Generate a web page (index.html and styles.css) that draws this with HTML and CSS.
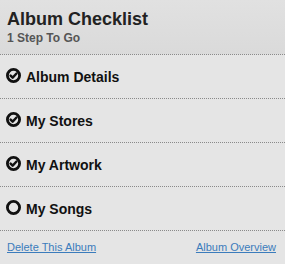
FILE: index.html
```html
<!DOCTYPE html>
<html lang="en">
<head>
  <meta charset="UTF-8" />
  <title>Album Checklist</title>
  <link rel="stylesheet" href="styles.css">
</head>
<body>

  <div id="checklist">
    <div class="header">
      <h1>Album Checklist</h1>
      <p class="steps">1 Step To Go</p>
    </div>

    <!-- pasos -->
    <div class="step done">
      <svg class="icon" viewBox="0 0 16 16"><circle cx="8" cy="8" r="6.5"/><path d="M4.9 8.1 L7.1 10.3 L11.2 5.9"/></svg>
      <span>Album Details</span>
    </div>
    <div class="step done">
      <svg class="icon" viewBox="0 0 16 16"><circle cx="8" cy="8" r="6.5"/><path d="M4.9 8.1 L7.1 10.3 L11.2 5.9"/></svg>
      <span>My Stores</span>
    </div>
    <div class="step done">
      <svg class="icon" viewBox="0 0 16 16"><circle cx="8" cy="8" r="6.5"/><path d="M4.9 8.1 L7.1 10.3 L11.2 5.9"/></svg>
      <span>My Artwork</span>
    </div>
    <div class="step">
      <svg class="icon" viewBox="0 0 16 16"><circle cx="8" cy="8" r="6.5"/></svg>
      <span>My Songs</span>
    </div>

    <div class="footer">
      <a href="#">Delete This Album</a>
      <a href="#">Album Overview</a>
    </div>
  </div>

</body>
</html>
```

FILE: styles.css
```css
body {
  margin: 0;
  padding: 0;
  background: #e5e5e5;
  font-family: "Liberation Sans", Arial, sans-serif;
}
#checklist {
  width: 285px;
}
.header {
  padding: 9px 7px 9px;
  background: linear-gradient(180deg, #e1e1e1 0%, #dadada 100%);
  border-bottom: 1px dotted #8a8a8a;
}
.header h1 {
  margin: 0;
  font-size: 18px;
  line-height: 20px;
  font-weight: bold;
  color: #222;
}
.header .steps {
  margin: 2px 0 0;
  font-size: 12px;
  line-height: 14px;
  font-weight: bold;
  color: #555;
}
.step {
  display: flex;
  align-items: center;
  gap: 5px;
  height: 43px;
  padding-left: 6px;
  border-bottom: 1px dotted #8a8a8a;
  font-size: 14px;
  font-weight: bold;
  color: #111;
}
.step:last-of-type {
  height: 44px;
}
.step .icon {
  width: 15px;
  height: 15px;
  margin-bottom: 2px;
  fill: none;
  stroke: #111;
  stroke-width: 3;
}
.step .icon path {
  stroke-width: 2.6;
  stroke-linecap: round;
  stroke-linejoin: round;
}
.footer {
  display: flex;
  justify-content: space-between;
  padding: 10px 9px 0 7px;
}
.footer a {
  font-size: 11px;
  line-height: 13px;
  color: #3b7cbc;
  text-decoration: underline;
}
```
